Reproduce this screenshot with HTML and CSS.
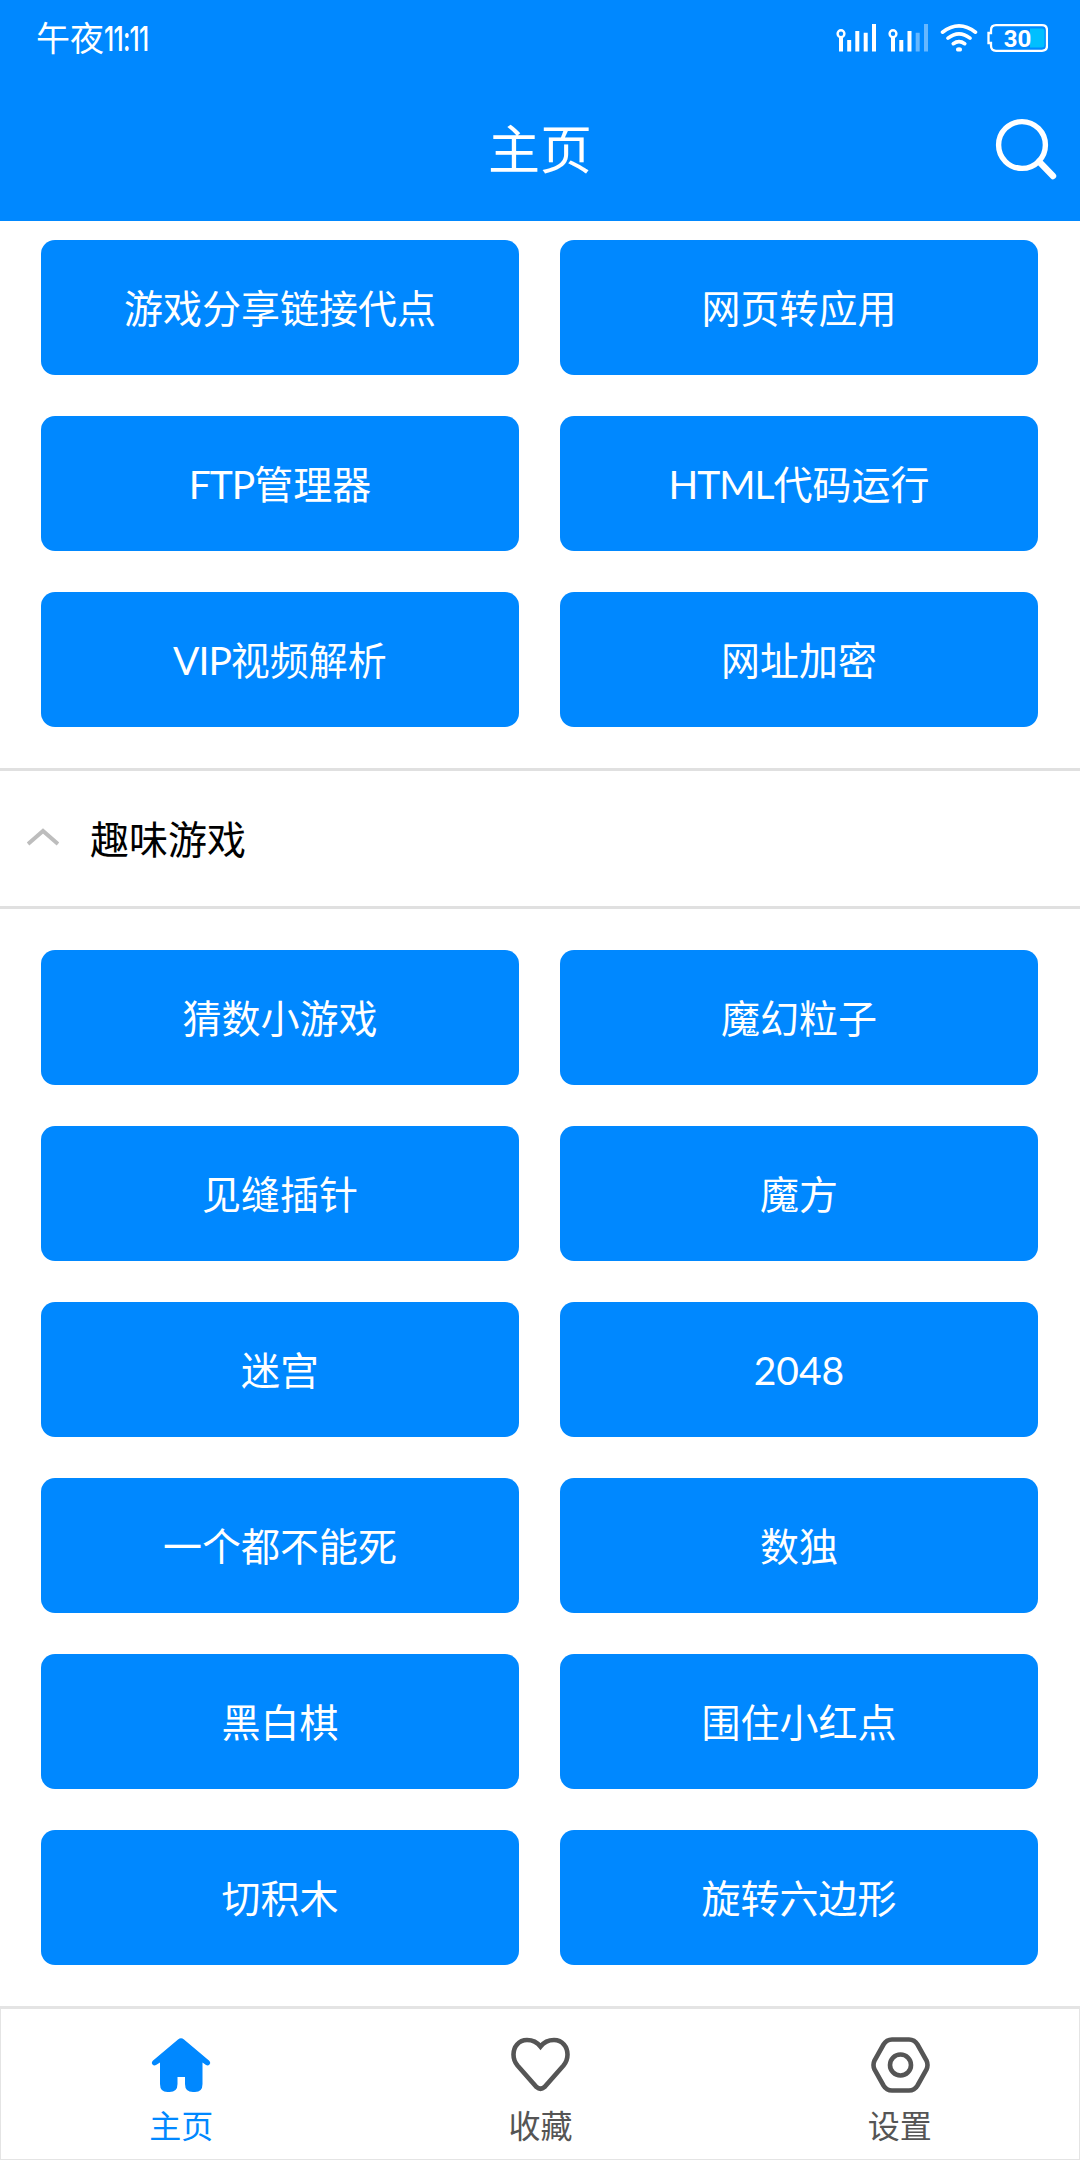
FILE: index.html
```html
<!DOCTYPE html>
<html lang="zh-CN">
<head>
<meta charset="utf-8">
<title>主页</title>
<link rel="stylesheet" href="styles.css">
</head>
<body>
<div class="app">
  <header class="header">
    <div class="status">
      <div class="time">午夜<span class="digits">11:11</span></div>
      <svg class="status-icons" width="212" height="28" viewBox="0 0 212 28" fill="none">
        <g stroke="#fff" stroke-width="4">
          <circle cx="5" cy="9.700" r="3.400" stroke-width="2.400"/>
          <path d="M5 13V27.500M13.200 16V27.500M21.300 7V27.500M29.700 8.800V27.500M38 0V27.500"/>
          <circle cx="57" cy="9.700" r="3.400" stroke-width="2.400"/>
          <path d="M57 13V27.500M65.300 16V27.500M73.500 7V27.500"/>
          <path d="M81.700 8.800V27.500M90 0V27.500" opacity=".4"/>
        </g>
        <g stroke="#fff" stroke-width="3.600" stroke-linecap="round">
          <path d="M106.500 8.200Q123 -4.500 139.500 8.200M112 14.200Q123 5.500 134 14.200M117.300 19.700Q123 15.600 128.700 19.700"/>
          <ellipse cx="123" cy="25.400" rx="2" ry="1.200" fill="#fff" stroke-width="2"/>
        </g>
        <path d="M194 4.500h12q2.500 0 2.500 2.500v14q0 2.500-2.500 2.500h-12z" fill="#00bfff"/>
        <path d="M160 1.200h46q5 0 5 5v15.600q0 5-5 5h-46q-5 0-5-5V19h-2.500v-10H155V6.200q0-5 5-5z" stroke="#fff" stroke-width="2.300"/>
        <text class="battery" x="181.500" y="22.500" text-anchor="middle">30</text>
      </svg>
    </div>
    <div class="titlebar">
      <h1>主页</h1>
      <svg class="search" width="64" height="64" viewBox="0 0 64 64" fill="none" stroke="#fff">
        <circle cx="28" cy="28" r="23.400" stroke-width="5.400"/>
        <path d="M45 44.500L59 59" stroke-width="6.400" stroke-linecap="round"/>
      </svg>
    </div>
  </header>
  <main>
    <div class="grid tools">
      <button>游戏分享链接代点</button><button>网页转应用</button>
      <button><span class="latin">FTP</span>管理器</button><button><span class="latin">HTML</span>代码运行</button>
      <button><span class="latin">VIP</span>视频解析</button><button>网址加密</button>
    </div>
    <div class="section">
      <svg width="32" height="18" viewBox="0 0 32 18" fill="none" stroke="#bdbdbd" stroke-width="4"><path d="M1 16L16 3L31 16"/></svg>
      <h2>趣味游戏</h2>
    </div>
    <div class="grid games">
      <button>猜数小游戏</button><button>魔幻粒子</button>
      <button>见缝插针</button><button>魔方</button>
      <button>迷宫</button><button>2048</button>
      <button>一个都不能死</button><button>数独</button>
      <button>黑白棋</button><button>围住小红点</button>
      <button>切积木</button><button>旋转六边形</button>
    </div>
  </main>
  <nav class="nav">
    <a class="active">
      <svg width="60" height="60" viewBox="0 0 60 60">
        <path d="M27 3.500Q30 1 33 3.500L58.500 25Q60 27 58.500 28.500Q57 30 55 29L51.500 26.500V48Q51.500 56 44 56H42Q34 56 34 48V41H26.500V48Q26.500 56 18.500 56H16.500Q9 56 9 48V26.500L5 29Q3 30 1.500 28.500Q0 27 1.500 25Z" fill="currentColor"/>
      </svg>
      <span>主页</span>
    </a>
    <a>
      <svg width="60" height="60" viewBox="0 0 60 60" fill="none" stroke="currentColor" stroke-width="4.600">
        <path d="M30.500 10.500C27 6 22 4 17 4C8.500 4 3.500 11 3.500 18.500C3.500 23 5 26.500 7.500 29.500L26.500 51Q30.500 54.500 34.500 51L53.500 29.500C56 26.500 57.500 23 57.500 18.500C57.500 11 52.500 4 44 4C39 4 34 6 30.500 10.500Z"/>
      </svg>
      <span>收藏</span>
    </a>
    <a>
      <svg width="60" height="60" viewBox="0 0 60 60" fill="none" stroke="currentColor" stroke-width="4.600">
        <path d="M22 3.500H39Q44.500 3.500 47.500 8.500L56.500 24.500Q58.500 29 56.500 33.500L47.500 49.500Q44.500 54.500 39 54.500H22Q16.500 54.500 13.500 49.500L4.500 33.500Q2.500 29 4.500 24.500L13.500 8.500Q16.500 3.500 22 3.500Z"/>
        <circle cx="30.500" cy="29" r="10.500"/>
      </svg>
      <span>设置</span>
    </a>
  </nav>
</div>
</body>
</html>
```
FILE: styles.css
```css
* { box-sizing: border-box; }
body {
  margin: 0;
  background: #fff;
  color: #000;
  font-family: Lato, "Noto Sans CJK SC", sans-serif;
}
.app {
  width: 1080px;
  height: 2160px;
  display: flex;
  flex-direction: column;
  overflow: hidden;
}
.header {
  height: 221px;
  flex: none;
  background: #08f;
  color: #fff;
}
.status {
  height: 76px;
  padding: 0 32px 0 36px;
  display: flex;
  align-items: center;
  justify-content: space-between;
}
.time {
  font-size: 34px;
  line-height: 40px;
  font-weight: 400;
}
.digits {
  display: inline-block;
  font-family: Inter, sans-serif;
  font-weight: 500;
  letter-spacing: -1px;
  transform: scaleX(.72);
  transform-origin: 0 50%;
}
.battery {
  font: 700 24px Roboto, sans-serif;
  fill: #fff;
}
.titlebar {
  height: 145px;
  padding: 0 22px 0 86px;
  display: grid;
  grid-template-columns: 1fr 64px;
  align-items: start;
}
h1, h2 { margin: 0; font-weight: 400; }
h1 {
  padding-top: 43px;
  text-align: center;
  font-size: 52px;
  line-height: 60px;
}
.search { margin-top: 41px; }
.grid {
  display: grid;
  grid-template-columns: 478px 478px;
  grid-auto-rows: 135px;
  gap: 41px;
  padding-left: 41px;
}
.tools { padding-top: 19px; padding-bottom: 41px; }
.games { padding-top: 41px; }
button {
  border: 0;
  padding: 1px 0 0;
  border-radius: 14px;
  background: #08f;
  color: #fff;
  font: 400 39px/50px Lato, "Noto Sans CJK SC", sans-serif;
}
.latin { letter-spacing: -1px; }
.section {
  height: 141px;
  padding-left: 27px;
  display: flex;
  align-items: center;
  gap: 31px;
  border: solid #e0e0e0;
  border-width: 3px 0;
}
h2 { font-size: 39px; line-height: 50px; padding-top: 1px; }
.section svg { margin-top: -4px; }
.nav {
  height: 154px;
  flex: none;
  margin-top: auto;
  display: grid;
  grid-template-columns: repeat(3, 1fr);
  border: 1px solid #e4e4e4;
  border-top-width: 3px;
}
.nav a {
  display: flex;
  flex-direction: column;
  align-items: center;
  padding: 27px 0 0 1px;
  color: #555;
  font-size: 32px;
  line-height: 40px;
}
.nav span { margin-top: 10px; }
.nav .active { color: #08f; }
```
